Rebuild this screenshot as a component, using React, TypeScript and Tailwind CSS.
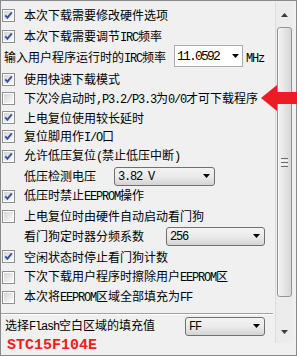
import React from "react";

const asciiRe = /^[\x00-\x7F]+$/;

function Mixed({ s }: { s: string }) {
  const parts = s.split(/([\x00-\x7F]+)/).filter((p) => p.length > 0);
  return (
    <span className="whitespace-pre leading-none">
      {parts.map((p, i) =>
        asciiRe.test(p) ? (
          <span
            key={i}
            className="font-['Liberation_Mono',monospace] text-[12px] tracking-[-1.2px]"
          >
            {p}
          </span>
        ) : (
          <span key={i}>{p}</span>
        )
      )}
    </span>
  );
}

function Box({ checked }: { checked: boolean }) {
  return (
    <svg width="13" height="13" viewBox="0 0 13 13" className="shrink-0">
      <defs>
        <linearGradient id="cbg" x1="0" y1="0" x2="1" y2="1">
          <stop offset="0" stopColor="#d4d4d4" />
          <stop offset="1" stopColor="#fbfbfb" />
        </linearGradient>
      </defs>
      <rect x="0.5" y="0.5" width="12" height="12" fill="#ffffff" stroke="#8e8f8f" />
      <rect x="2" y="2" width="9" height="9" fill="url(#cbg)" />
      {checked && (
        <path
          d="M3.2 6.3 L5.4 8.7 L9.8 3.4"
          fill="none"
          stroke="#3a56a0"
          strokeWidth="1.9"
        />
      )}
    </svg>
  );
}

function Down() {
  return (
    <svg width="7" height="4" viewBox="0 0 7 4" className="shrink-0">
      <polygon points="0,0 7,0 3.5,4" fill="#000000" />
    </svg>
  );
}

function CheckRow({ checked, text, h }: { checked: boolean; text: string; h: string }) {
  return (
    <div className={`${h} flex items-center pl-[1px]`}>
      <Box checked={checked} />
      <span className="ml-[9px]">
        <Mixed s={text} />
      </span>
    </div>
  );
}

function DropCombo({ w, text }: { w: string; text: string }) {
  return (
    <div
      className={`${w} h-[19px] rounded-[3px] border border-[#707070] bg-linear-to-b from-[#f3f3f3] via-[#ebebeb] to-[#d4d4d4] flex items-center justify-between pl-[3px] pr-[4px]`}
    >
      <Mixed s={text} />
      <Down />
    </div>
  );
}

export default function App() {
  return (
    <div className="relative w-[297px] h-[356px] border border-[#8a8a8a] bg-[#f0f0f0] flex font-['Noto_Sans_CJK_SC',sans-serif] text-[12px] text-black leading-none">
      <div className="w-[274px] flex flex-col pt-[3px]">
        <CheckRow h="h-[22px]" checked text="本次下载需要修改硬件选项" />
        <CheckRow h="h-[21px]" checked text="本次下载需要调节IRC频率" />
        <div className="h-[22px] flex items-center pl-[3px]">
          <span className="w-[170px]">
            <Mixed s="输入用户程序运行时的IRC频率" />
          </span>
          <div className="w-[69px] h-[22px] mb-[4px] bg-white border border-[#a9abb2] flex items-center justify-between pl-[2px] pr-[3px]">
            <span className="font-['Liberation_Mono',monospace] text-[13px] tracking-[-1.8px]">11.0592</span>
            <Down />
          </div>
          <span className="ml-[3px]">
            <Mixed s="MHz" />
          </span>
        </div>
        <CheckRow h="h-[20px]" checked text="使用快速下载模式" />
        <CheckRow h="h-[19px]" checked={false} text="下次冷启动时,P3.2/P3.3为0/0才可下载程序" />
        <CheckRow h="h-[19px]" checked text="上电复位使用较长延时" />
        <CheckRow h="h-[19px]" checked text="复位脚用作I/O口" />
        <CheckRow h="h-[20px]" checked text="允许低压复位(禁止低压中断)" />
        <div className="h-[20px] flex items-center pl-[23px]">
          <span className="w-[90px]">
            <Mixed s="低压检测电压" />
          </span>
          <DropCombo w="w-[101px]" text="3.82 V" />
        </div>
        <CheckRow h="h-[20px]" checked text="低压时禁止EEPROM操作" />
        <CheckRow h="h-[20px]" checked={false} text="上电复位时由硬件自动启动看门狗" />
        <div className="h-[20px] flex items-center pl-[23px]">
          <span className="w-[142px]">
            <Mixed s="看门狗定时器分频系数" />
          </span>
          <DropCombo w="w-[99px]" text="256" />
        </div>
        <CheckRow h="h-[21px]" checked text="空闲状态时停止看门狗计数" />
        <CheckRow h="h-[20px]" checked={false} text="下次下载用户程序时擦除用户EEPROM区" />
        <CheckRow h="h-[20px]" checked={false} text="本次将EEPROM区域全部填充为FF" />
        <div className="h-[6px]" />
        <div className="w-[272px] h-px bg-[#a0a0a0]" />
        <div className="w-[272px] h-px bg-white" />
        <div className="h-[22px] flex items-center pl-[4px]">
          <span className="w-[180px]">
            <Mixed s="选择Flash空白区域的填充值" />
          </span>
          <DropCombo w="w-[80px]" text="FF" />
        </div>
        <div className="h-[16px] flex items-center pl-[6px]">
          <span className="font-['Liberation_Mono',monospace] font-bold text-[15px] text-[#f01c1c] leading-none">
            STC15F104E
          </span>
        </div>
      </div>

      <div className="w-[18px] h-[341px] mt-[1px] flex flex-col bg-[#ececec] border-l border-[#dcdcdc]">
        <div className="h-[25px] flex items-center justify-center">
          <svg width="7" height="4" viewBox="0 0 7 4">
            <polygon points="0,4 7,4 3.5,0" fill="#3c3c3c" />
          </svg>
        </div>
        <div className="h-[270px] mx-[1px] rounded-[3px] border border-[#959595] bg-linear-to-r from-[#f4f4f4] to-[#d6d6d6] flex flex-col items-center justify-center gap-[1px]">
          <div className="w-[7px] h-px bg-[#6e6e6e]" />
          <div className="w-[7px] h-px bg-[#f8f8f8]" />
          <div className="w-[7px] h-px bg-[#6e6e6e]" />
          <div className="w-[7px] h-px bg-[#f8f8f8]" />
          <div className="w-[7px] h-px bg-[#6e6e6e]" />
        </div>
        <div className="flex-1 flex items-end justify-center pb-[9px]">
          <svg width="7" height="4" viewBox="0 0 7 4">
            <polygon points="0,0 7,0 3.5,4" fill="#3c3c3c" />
          </svg>
        </div>
      </div>

      <svg
        width="37"
        height="26"
        viewBox="0 0 37 26"
        className="absolute left-[260px] top-[84px] overflow-visible"
      >
        <polygon points="0,13 16,0 16,7 37,7 37,19 16,19 16,26" fill="#ec1c24" />
      </svg>
    </div>
  );
}
